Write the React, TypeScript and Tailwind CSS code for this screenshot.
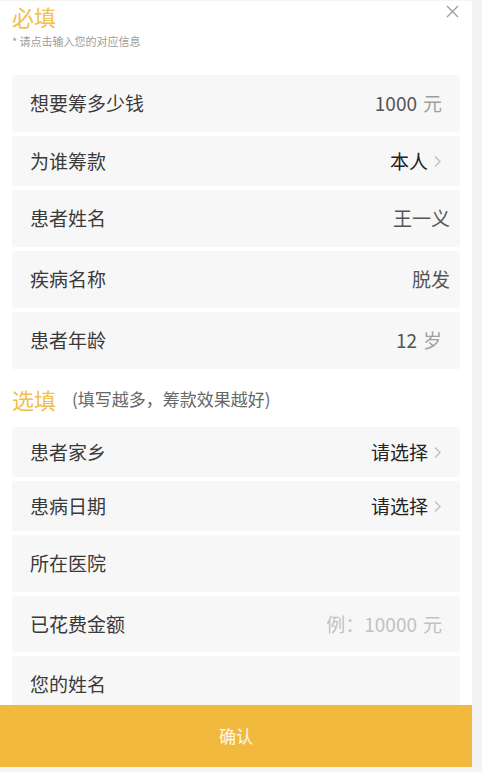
import React from 'react';

type Row = {
  label: string;
  value?: string;
  suffix?: string;
  arrow?: boolean;
  placeholder?: boolean;
  h: string;
  dark?: boolean;
};

const required: Row[] = [
  { label: '想要筹多少钱', value: '1000', suffix: '元', h: 'h-[57px]' },
  { label: '为谁筹款', value: '本人', arrow: true, dark: true, h: 'h-[50px]' },
  { label: '患者姓名', value: '王一义', h: 'h-[57px]' },
  { label: '疾病名称', value: '脱发', h: 'h-[57px]' },
  { label: '患者年龄', value: '12', suffix: '岁', h: 'h-[57px]' },
];

const optional: Row[] = [
  { label: '患者家乡', value: '请选择', arrow: true, dark: true, h: 'h-[50px]' },
  { label: '患病日期', value: '请选择', arrow: true, dark: true, h: 'h-[50px]' },
  { label: '所在医院', h: 'h-[57px]' },
  { label: '已花费金额', value: '例：10000', suffix: '元', placeholder: true, h: 'h-[56px]' },
  { label: '您的姓名', h: 'h-[57px]' },
];

const Chevron = () => (
  <svg width="9" height="13" viewBox="0 0 9 13" className="ml-[5px]">
    <polyline points="2,1.5 7,6.5 2,11.5" fill="none" stroke="#c4c4c4" strokeWidth="1.6" />
  </svg>
);

const FormRow: React.FC<{ row: Row }> = ({ row }) => {
  const padRight = row.suffix || row.arrow ? 'pr-[18px]' : 'pr-[10px]';
  return (
    <div className={`flex items-center justify-between bg-[#f7f7f7] pl-[18px] ${padRight} ${row.h}`}>
      <span className="text-[19px] text-[#3a3a3a]">{row.label}</span>
      {row.value && (
        <span className="flex items-center text-[19px]">
          <span className={row.placeholder ? 'text-[#c2c2c2]' : row.dark ? 'text-[#222]' : 'text-[#555]'}>
            {row.value}
          </span>
          {row.suffix && (
            <span className={`ml-[6px] ${row.placeholder ? 'text-[#c2c2c2]' : 'text-[#a0a0a0]'}`}>{row.suffix}</span>
          )}
          {row.arrow && <Chevron />}
        </span>
      )}
    </div>
  );
};

export default function App() {
  return (
    <div
      className="h-[772px] w-full bg-[#f4f4f4] pt-px"
      style={{ fontFamily: '"Noto Sans CJK SC", "Noto Sans", sans-serif' }}
    >
      <div className="relative h-[766px] w-[472px] overflow-hidden bg-white px-3">
        {/* close */}
        <button className="absolute right-[13px] top-[4px] p-0">
          <svg width="13" height="13" viewBox="0 0 13 13">
            <path d="M1 1 L12 12 M12 1 L1 12" stroke="#9a9a9a" strokeWidth="1.2" />
          </svg>
        </button>

        <div className="pt-px text-[22px] leading-[28px] text-[#f1c04c]">必填</div>
        <div className="mt-[3px] text-[11px] leading-[16px] text-[#9c9c9c]">* 请点击输入您的对应信息</div>

        <div className="mt-[26px] flex flex-col gap-[4px]">
          {required.map((r) => (
            <FormRow key={r.label} row={r} />
          ))}
        </div>

        <div className="mt-[16px] flex h-[28px] items-center">
          <span className="text-[22px] text-[#f1c04c]">选填</span>
          <span className="ml-[16px] text-[17px] text-[#666]">(填写越多，筹款效果越好)</span>
        </div>

        <div className="mt-[14px] flex flex-col gap-[4px]">
          {optional.map((r) => (
            <FormRow key={r.label} row={r} />
          ))}
        </div>

        <button className="absolute bottom-0 left-0 flex h-[62px] w-full items-center justify-center bg-[#f2b93f] text-[17px] text-white/90">
          确认
        </button>
      </div>
    </div>
  );
}
